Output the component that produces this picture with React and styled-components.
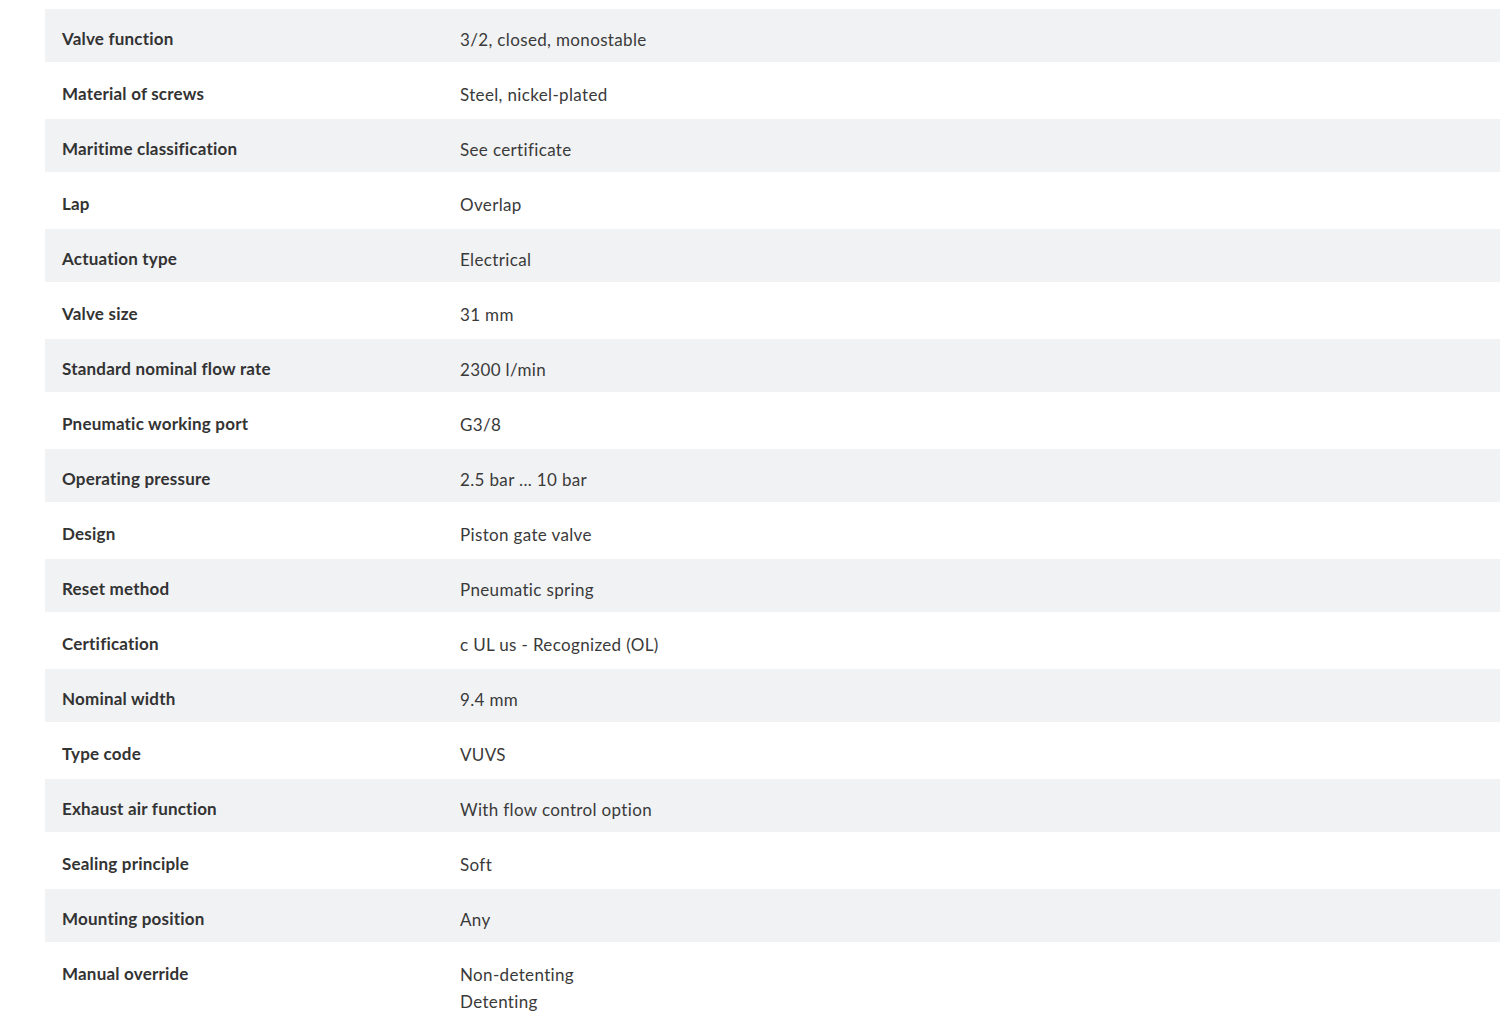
import React from "react";
import styled, { createGlobalStyle } from "styled-components";

const GlobalStyle = createGlobalStyle`
  body {
    margin: 0;
    background: #ffffff;
    font-family: Lato, "Open Sans", sans-serif;
    color: #333333;
  }
`;

const Page = styled.div`
  padding: 9px 0 0 45px;
`;

const Table = styled.div`
  display: flex;
  flex-direction: column;
`;

const Row = styled.div`
  display: grid;
  grid-template-columns: 415px 1fr;
  min-height: ${(p) => (p.$striped ? "53px" : "57px")};
  background: ${(p) => (p.$striped ? "#f1f2f4" : "#ffffff")};
  box-sizing: border-box;
  padding-top: ${(p) => (p.$striped ? "20px" : "22px")};
  padding-bottom: ${(p) => (p.$last ? "12px" : "0")};
`;

const Label = styled.div`
  padding-left: 17px;
  font-size: 17px;
  font-weight: 700;
  letter-spacing: 0.2px;
  color: #333333;
  line-height: 20px;
`;

const Value = styled.div`
  font-size: 17px;
  letter-spacing: 0.35px;
  color: #3a3a3a;
  line-height: 27px;
  margin-top: -3px;
`;

const specs = [
  ["Valve function", ["3/2, closed, monostable"]],
  ["Material of screws", ["Steel, nickel-plated"]],
  ["Maritime classification", ["See certificate"]],
  ["Lap", ["Overlap"]],
  ["Actuation type", ["Electrical"]],
  ["Valve size", ["31 mm"]],
  ["Standard nominal flow rate", ["2300 l/min"]],
  ["Pneumatic working port", ["G3/8"]],
  ["Operating pressure", ["2.5 bar ... 10 bar"]],
  ["Design", ["Piston gate valve"]],
  ["Reset method", ["Pneumatic spring"]],
  ["Certification", ["c UL us - Recognized (OL)"]],
  ["Nominal width", ["9.4 mm"]],
  ["Type code", ["VUVS"]],
  ["Exhaust air function", ["With flow control option"]],
  ["Sealing principle", ["Soft"]],
  ["Mounting position", ["Any"]],
  ["Manual override", ["Non-detenting", "Detenting"]],
];

function App() {
  return (
    <Page>
      <GlobalStyle />
      <Table>
        {specs.map(([label, values], i) => (
          <Row key={label} $striped={i % 2 === 0} $last={i === specs.length - 1}>
            <Label>{label}</Label>
            <Value>
              {values.map((v) => (
                <div key={v}>{v}</div>
              ))}
            </Value>
          </Row>
        ))}
      </Table>
    </Page>
  );
}

export default App;
